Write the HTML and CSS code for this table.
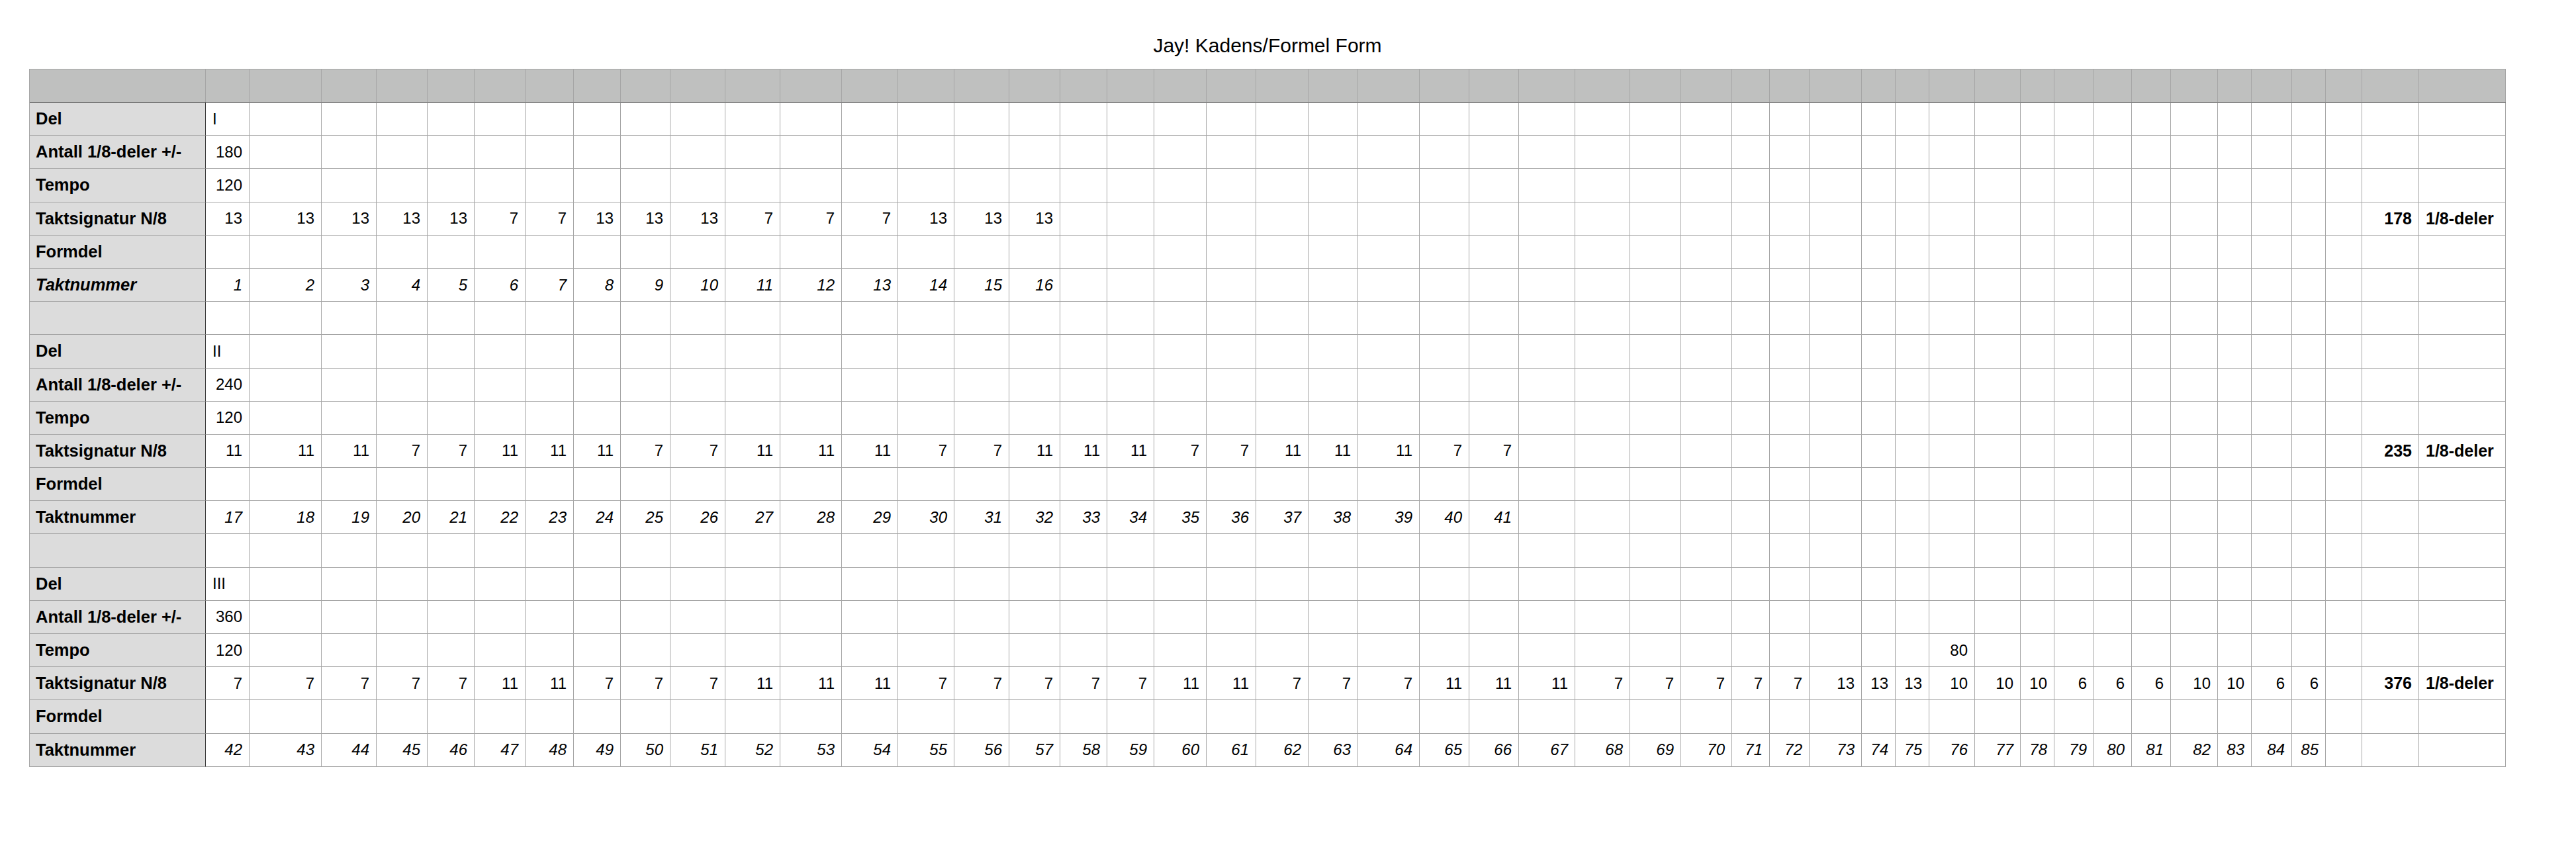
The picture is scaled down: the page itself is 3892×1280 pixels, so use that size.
FILE: index.html
```html
<!DOCTYPE html>
<html lang="no">
<head>
<meta charset="utf-8">
<title>Jay! Kadens/Formel Form</title>
<link rel="stylesheet" href="styles.css">
</head>
<body>
<div class="page">
<h1 class="title">Jay! Kadens/Formel Form</h1>
<div class="sheet">
<div class="row head">
<div></div><div></div><div></div><div></div><div></div><div></div><div></div><div></div><div></div><div></div>
<div></div><div></div><div></div><div></div><div></div><div></div><div></div><div></div><div></div><div></div>
<div></div><div></div><div></div><div></div><div></div><div></div><div></div><div></div><div></div><div></div>
<div></div><div></div><div></div><div></div><div></div><div></div><div></div><div></div><div></div><div></div>
<div></div><div></div><div></div><div></div><div></div><div></div><div></div><div></div>
</div>

<div class="row">
<div class="lab">Del</div><div class="txt">I</div>
<div></div><div></div><div></div><div></div><div></div><div></div><div></div><div></div><div></div><div></div>
<div></div><div></div><div></div><div></div><div></div><div></div><div></div><div></div><div></div><div></div>
<div></div><div></div><div></div><div></div><div></div><div></div><div></div><div></div><div></div><div></div>
<div></div><div></div><div></div><div></div><div></div><div></div><div></div><div></div><div></div><div></div>
<div></div><div></div><div></div><div></div><div></div><div></div>
</div>
<div class="row">
<div class="lab">Antall 1/8-deler +/-</div><div>180</div>
<div></div><div></div><div></div><div></div><div></div><div></div><div></div><div></div><div></div><div></div>
<div></div><div></div><div></div><div></div><div></div><div></div><div></div><div></div><div></div><div></div>
<div></div><div></div><div></div><div></div><div></div><div></div><div></div><div></div><div></div><div></div>
<div></div><div></div><div></div><div></div><div></div><div></div><div></div><div></div><div></div><div></div>
<div></div><div></div><div></div><div></div><div></div><div></div>
</div>
<div class="row">
<div class="lab">Tempo</div><div>120</div>
<div></div><div></div><div></div><div></div><div></div><div></div><div></div><div></div><div></div><div></div>
<div></div><div></div><div></div><div></div><div></div><div></div><div></div><div></div><div></div><div></div>
<div></div><div></div><div></div><div></div><div></div><div></div><div></div><div></div><div></div><div></div>
<div></div><div></div><div></div><div></div><div></div><div></div><div></div><div></div><div></div><div></div>
<div></div><div></div><div></div><div></div><div></div><div></div>
</div>
<div class="row">
<div class="lab">Taktsignatur N/8</div>
<div>13</div><div>13</div><div>13</div><div>13</div><div>13</div><div>7</div><div>7</div><div>13</div><div>13</div><div>13</div>
<div>7</div><div>7</div><div>7</div><div>13</div><div>13</div><div>13</div>
<div></div><div></div><div></div><div></div><div></div><div></div><div></div><div></div><div></div><div></div>
<div></div><div></div><div></div><div></div><div></div><div></div><div></div><div></div><div></div><div></div>
<div></div><div></div><div></div><div></div><div></div><div></div><div></div><div></div><div></div>
<div class="sum">178</div><div class="unit">1/8-deler</div>
</div>
<div class="row">
<div class="lab">Formdel</div>
<div></div><div></div><div></div><div></div><div></div><div></div><div></div><div></div><div></div><div></div>
<div></div><div></div><div></div><div></div><div></div><div></div><div></div><div></div><div></div><div></div>
<div></div><div></div><div></div><div></div><div></div><div></div><div></div><div></div><div></div><div></div>
<div></div><div></div><div></div><div></div><div></div><div></div><div></div><div></div><div></div><div></div>
<div></div><div></div><div></div><div></div><div></div><div></div><div></div>
</div>
<div class="row">
<div class="lab it">Taktnummer</div>
<div class="it">1</div><div class="it">2</div><div class="it">3</div><div class="it">4</div><div class="it">5</div><div class="it">6</div><div class="it">7</div><div class="it">8</div><div class="it">9</div><div class="it">10</div>
<div class="it">11</div><div class="it">12</div><div class="it">13</div><div class="it">14</div><div class="it">15</div><div class="it">16</div>
<div></div><div></div><div></div><div></div><div></div><div></div><div></div><div></div><div></div><div></div>
<div></div><div></div><div></div><div></div><div></div><div></div><div></div><div></div><div></div><div></div>
<div></div><div></div><div></div><div></div><div></div><div></div><div></div><div></div><div></div><div></div>
<div></div>
</div>
<div class="row">
<div class="lab"></div>
<div></div><div></div><div></div><div></div><div></div><div></div><div></div><div></div><div></div><div></div>
<div></div><div></div><div></div><div></div><div></div><div></div><div></div><div></div><div></div><div></div>
<div></div><div></div><div></div><div></div><div></div><div></div><div></div><div></div><div></div><div></div>
<div></div><div></div><div></div><div></div><div></div><div></div><div></div><div></div><div></div><div></div>
<div></div><div></div><div></div><div></div><div></div><div></div><div></div>
</div>

<div class="row">
<div class="lab">Del</div><div class="txt">II</div>
<div></div><div></div><div></div><div></div><div></div><div></div><div></div><div></div><div></div><div></div>
<div></div><div></div><div></div><div></div><div></div><div></div><div></div><div></div><div></div><div></div>
<div></div><div></div><div></div><div></div><div></div><div></div><div></div><div></div><div></div><div></div>
<div></div><div></div><div></div><div></div><div></div><div></div><div></div><div></div><div></div><div></div>
<div></div><div></div><div></div><div></div><div></div><div></div>
</div>
<div class="row">
<div class="lab">Antall 1/8-deler +/-</div><div>240</div>
<div></div><div></div><div></div><div></div><div></div><div></div><div></div><div></div><div></div><div></div>
<div></div><div></div><div></div><div></div><div></div><div></div><div></div><div></div><div></div><div></div>
<div></div><div></div><div></div><div></div><div></div><div></div><div></div><div></div><div></div><div></div>
<div></div><div></div><div></div><div></div><div></div><div></div><div></div><div></div><div></div><div></div>
<div></div><div></div><div></div><div></div><div></div><div></div>
</div>
<div class="row">
<div class="lab">Tempo</div><div>120</div>
<div></div><div></div><div></div><div></div><div></div><div></div><div></div><div></div><div></div><div></div>
<div></div><div></div><div></div><div></div><div></div><div></div><div></div><div></div><div></div><div></div>
<div></div><div></div><div></div><div></div><div></div><div></div><div></div><div></div><div></div><div></div>
<div></div><div></div><div></div><div></div><div></div><div></div><div></div><div></div><div></div><div></div>
<div></div><div></div><div></div><div></div><div></div><div></div>
</div>
<div class="row">
<div class="lab">Taktsignatur N/8</div>
<div>11</div><div>11</div><div>11</div><div>7</div><div>7</div><div>11</div><div>11</div><div>11</div><div>7</div><div>7</div>
<div>11</div><div>11</div><div>11</div><div>7</div><div>7</div><div>11</div><div>11</div><div>11</div><div>7</div><div>7</div>
<div>11</div><div>11</div><div>11</div><div>7</div><div>7</div>
<div></div><div></div><div></div><div></div><div></div><div></div><div></div><div></div><div></div><div></div>
<div></div><div></div><div></div><div></div><div></div><div></div><div></div><div></div><div></div><div></div>
<div class="sum">235</div><div class="unit">1/8-deler</div>
</div>
<div class="row">
<div class="lab">Formdel</div>
<div></div><div></div><div></div><div></div><div></div><div></div><div></div><div></div><div></div><div></div>
<div></div><div></div><div></div><div></div><div></div><div></div><div></div><div></div><div></div><div></div>
<div></div><div></div><div></div><div></div><div></div><div></div><div></div><div></div><div></div><div></div>
<div></div><div></div><div></div><div></div><div></div><div></div><div></div><div></div><div></div><div></div>
<div></div><div></div><div></div><div></div><div></div><div></div><div></div>
</div>
<div class="row">
<div class="lab">Taktnummer</div>
<div class="it">17</div><div class="it">18</div><div class="it">19</div><div class="it">20</div><div class="it">21</div><div class="it">22</div><div class="it">23</div><div class="it">24</div><div class="it">25</div><div class="it">26</div>
<div class="it">27</div><div class="it">28</div><div class="it">29</div><div class="it">30</div><div class="it">31</div><div class="it">32</div><div class="it">33</div><div class="it">34</div><div class="it">35</div><div class="it">36</div>
<div class="it">37</div><div class="it">38</div><div class="it">39</div><div class="it">40</div><div class="it">41</div>
<div></div><div></div><div></div><div></div><div></div><div></div><div></div><div></div><div></div><div></div>
<div></div><div></div><div></div><div></div><div></div><div></div><div></div><div></div><div></div><div></div>
<div></div><div></div>
</div>
<div class="row">
<div class="lab"></div>
<div></div><div></div><div></div><div></div><div></div><div></div><div></div><div></div><div></div><div></div>
<div></div><div></div><div></div><div></div><div></div><div></div><div></div><div></div><div></div><div></div>
<div></div><div></div><div></div><div></div><div></div><div></div><div></div><div></div><div></div><div></div>
<div></div><div></div><div></div><div></div><div></div><div></div><div></div><div></div><div></div><div></div>
<div></div><div></div><div></div><div></div><div></div><div></div><div></div>
</div>

<div class="row">
<div class="lab">Del</div><div class="txt">III</div>
<div></div><div></div><div></div><div></div><div></div><div></div><div></div><div></div><div></div><div></div>
<div></div><div></div><div></div><div></div><div></div><div></div><div></div><div></div><div></div><div></div>
<div></div><div></div><div></div><div></div><div></div><div></div><div></div><div></div><div></div><div></div>
<div></div><div></div><div></div><div></div><div></div><div></div><div></div><div></div><div></div><div></div>
<div></div><div></div><div></div><div></div><div></div><div></div>
</div>
<div class="row">
<div class="lab">Antall 1/8-deler +/-</div><div>360</div>
<div></div><div></div><div></div><div></div><div></div><div></div><div></div><div></div><div></div><div></div>
<div></div><div></div><div></div><div></div><div></div><div></div><div></div><div></div><div></div><div></div>
<div></div><div></div><div></div><div></div><div></div><div></div><div></div><div></div><div></div><div></div>
<div></div><div></div><div></div><div></div><div></div><div></div><div></div><div></div><div></div><div></div>
<div></div><div></div><div></div><div></div><div></div><div></div>
</div>
<div class="row">
<div class="lab">Tempo</div><div>120</div>
<div></div><div></div><div></div><div></div><div></div><div></div><div></div><div></div><div></div><div></div>
<div></div><div></div><div></div><div></div><div></div><div></div><div></div><div></div><div></div><div></div>
<div></div><div></div><div></div><div></div><div></div><div></div><div></div><div></div><div></div><div></div>
<div></div><div></div><div></div>
<div>80</div>
<div></div><div></div><div></div><div></div><div></div><div></div><div></div><div></div><div></div><div></div>
<div></div><div></div>
</div>
<div class="row">
<div class="lab">Taktsignatur N/8</div>
<div>7</div><div>7</div><div>7</div><div>7</div><div>7</div><div>11</div><div>11</div><div>7</div><div>7</div><div>7</div>
<div>11</div><div>11</div><div>11</div><div>7</div><div>7</div><div>7</div><div>7</div><div>7</div><div>11</div><div>11</div>
<div>7</div><div>7</div><div>7</div><div>11</div><div>11</div><div>11</div><div>7</div><div>7</div><div>7</div><div>7</div>
<div>7</div><div>13</div><div>13</div><div>13</div><div>10</div><div>10</div><div>10</div><div>6</div><div>6</div><div>6</div>
<div>10</div><div>10</div><div>6</div><div>6</div>
<div></div>
<div class="sum">376</div><div class="unit">1/8-deler</div>
</div>
<div class="row">
<div class="lab">Formdel</div>
<div></div><div></div><div></div><div></div><div></div><div></div><div></div><div></div><div></div><div></div>
<div></div><div></div><div></div><div></div><div></div><div></div><div></div><div></div><div></div><div></div>
<div></div><div></div><div></div><div></div><div></div><div></div><div></div><div></div><div></div><div></div>
<div></div><div></div><div></div><div></div><div></div><div></div><div></div><div></div><div></div><div></div>
<div></div><div></div><div></div><div></div><div></div><div></div><div></div>
</div>
<div class="row">
<div class="lab">Taktnummer</div>
<div class="it">42</div><div class="it">43</div><div class="it">44</div><div class="it">45</div><div class="it">46</div><div class="it">47</div><div class="it">48</div><div class="it">49</div><div class="it">50</div><div class="it">51</div>
<div class="it">52</div><div class="it">53</div><div class="it">54</div><div class="it">55</div><div class="it">56</div><div class="it">57</div><div class="it">58</div><div class="it">59</div><div class="it">60</div><div class="it">61</div>
<div class="it">62</div><div class="it">63</div><div class="it">64</div><div class="it">65</div><div class="it">66</div><div class="it">67</div><div class="it">68</div><div class="it">69</div><div class="it">70</div><div class="it">71</div>
<div class="it">72</div><div class="it">73</div><div class="it">74</div><div class="it">75</div><div class="it">76</div><div class="it">77</div><div class="it">78</div><div class="it">79</div><div class="it">80</div><div class="it">81</div>
<div class="it">82</div><div class="it">83</div><div class="it">84</div><div class="it">85</div>
<div></div><div></div><div></div>
</div>
</div>
</div>
</body>
</html>
```
FILE: styles.css
```css
* {
  box-sizing: border-box;
}

html,
body {
  margin: 0;
  background: #ffffff;
}

body {
  font-family: "Liberation Sans", Arial, Helvetica, sans-serif;
  color: #000000;
}

.page {
  padding: 52px 0 0 44px;
  width: 3892px;
}

.title {
  width: 3742px;
  margin: 0 0 18px;
  font-size: 30px;
  font-weight: normal;
  line-height: 34px;
  text-align: center;
}

.sheet {
  display: flex;
  flex-direction: column;
  width: 3742px;
  border-left: 1px solid #a6a6a6;
  border-top: 1px solid #a6a6a6;
}

.row {
  display: grid;
  grid-template-columns:
    266px 66px 109px 83px 77px 71px 77px 73px 71px 75px
    83px 83px 93px 85px 85px 83px 77px 71px 71px 79px
    75px 79px 75px 93px 75px 75px 85px 83px 77px 77px
    57px 60px 79px 51px 51px 69px 69px 51px 60px 57px
    59px 71px 51px 61px 51px 55px 86px 131px;
  height: 50.2px;
}

.row > div {
  display: flex;
  align-items: center;
  justify-content: flex-end;
  padding: 0 10px;
  border-right: 1px solid #a6a6a6;
  border-bottom: 1px solid #a6a6a6;
  font-size: 24px;
  white-space: nowrap;
  overflow: visible;
}

.head {
  height: 50px;
}

.head > div {
  background: #bfc0bf;
  border-bottom-color: #3a3a3a;
}

.row > .lab {
  justify-content: flex-start;
  padding-left: 9px;
  background: #dcdcdc;
  border-right-color: #3a3a3a;
  font-size: 25.5px;
  font-weight: bold;
}

.row > .txt {
  justify-content: flex-start;
}

.row > .it {
  font-style: italic;
}

.row > .sum {
  font-size: 25px;
  font-weight: bold;
}

.row > .unit {
  justify-content: flex-start;
  font-size: 25px;
  font-weight: bold;
}
```
